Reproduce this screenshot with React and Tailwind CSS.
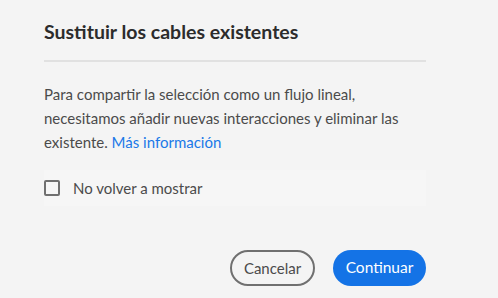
import React, { useState } from 'react';

export default function App() {
  const [dontShow, setDontShow] = useState(false);

  return (
    <div className="w-[498px] h-[298px] bg-[#f4f4f4] overflow-hidden" style={{ fontFamily: 'Lato, "Open Sans", sans-serif' }}>
      <div className="w-[382px] ml-[44px] flex flex-col">
        {/* Header */}
        <h2 className="pt-[19px] text-[19.5px] leading-[26px] font-bold text-[#2c2c2c]">Sustituir los cables existentes</h2>
        <div className="mt-[15px] h-[2px] bg-[#e1e1e1]"></div>

        {/* Body */}
        <p className="mt-[20px] text-[15px] leading-[24px] text-[#4b4b4b]">
          Para compartir la selección como un flujo lineal, necesitamos añadir nuevas interacciones y eliminar las existente.{' '}
          <a href="#" className="text-[#1a79e8]">Más información</a>
        </p>

        <label className="mt-[16px] flex items-center h-[36px] bg-[#f6f6f6] cursor-pointer">
          <span
            onClick={() => setDontShow(!dontShow)}
            className="w-[16px] h-[16px] border-2 border-[#707070] rounded-[2px]"
          ></span>
          <span className="ml-[13px] text-[15px] text-[#4b4b4b]">No volver a mostrar</span>
        </label>

        {/* Footer */}
        <div className="mt-[44px] flex justify-end gap-[18px]">
          <button className="h-[36px] w-[85px] rounded-full border-2 border-[#707070] text-[15px] text-[#4b4b4b]">Cancelar</button>
          <button className="h-[36px] w-[93px] rounded-full bg-[#1473e6] text-[15.5px] text-white">Continuar</button>
        </div>
      </div>
    </div>
  );
}
